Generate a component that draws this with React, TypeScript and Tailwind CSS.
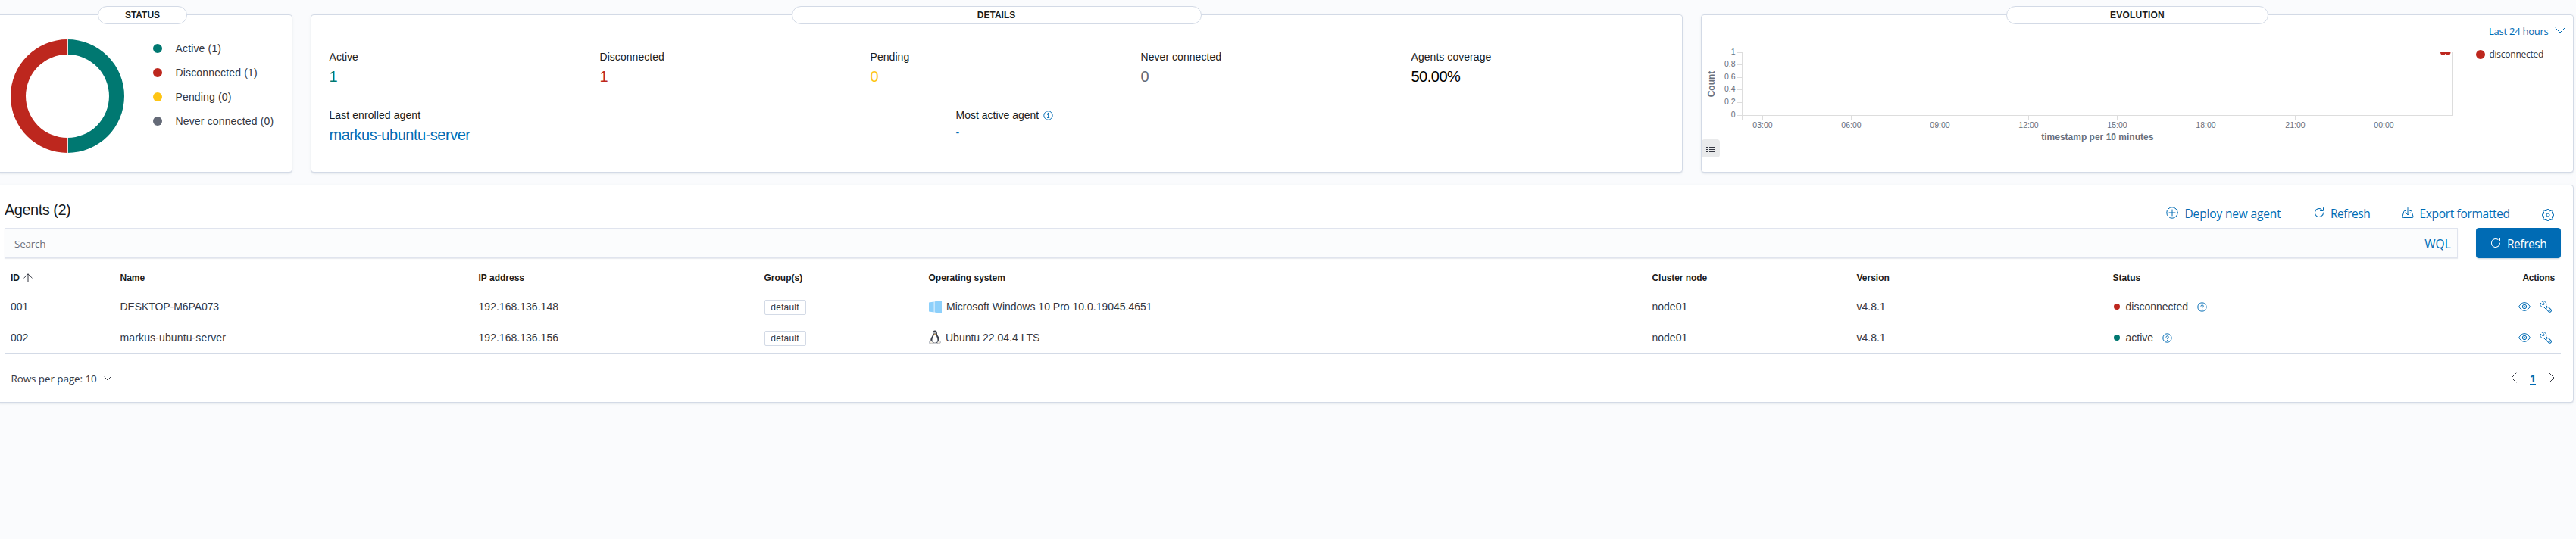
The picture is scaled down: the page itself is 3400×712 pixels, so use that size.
import React, { type ReactNode } from "react";

const SEGOE = "font-['Open_Sans',sans-serif]";
const PANEL =
  "border border-[#d3dae6] bg-white rounded-[4px] shadow-[0_2px_2px_-1px_rgba(152,162,179,0.3),0_1px_5px_-2px_rgba(152,162,179,0.3)]";

/* ---------- icons ---------- */

function RefreshIcon() {
  return (
    <svg width="16" height="16" viewBox="0 0 16 16" fill="currentColor" className="shrink-0">
      <path d="M11.228 2.942a.5.5 0 1 1-.538.842A5 5 0 1 0 13 8a.5.5 0 1 1 1 0 6 6 0 1 1-2.772-5.058zM14 1.5v3A1.5 1.5 0 0 1 12.5 6h-3a.5.5 0 0 1 0-1h3a.5.5 0 0 0 .5-.5v-3a.5.5 0 1 1 1 0z" />
    </svg>
  );
}

function PlusCircleIcon() {
  return (
    <svg width="16" height="16" viewBox="0 0 16 16" fill="none" stroke="currentColor" strokeLinecap="round" className="shrink-0">
      <circle cx="8" cy="8" r="7.2" />
      <path d="M8 4v8M4 8h8" />
    </svg>
  );
}

function ExportIcon() {
  return (
    <svg width="16" height="16" viewBox="0 0 16 16" fill="none" stroke="currentColor" strokeLinecap="round" strokeLinejoin="round" className="shrink-0">
      <path d="M8 1.5v9M5 8l3 2.8L11 8" />
      <path d="M5.2 5.5H3.8a1 1 0 0 0-1 .8L1 13a1.2 1.2 0 0 0 1.2 1.5h11.6A1.2 1.2 0 0 0 15 13l-1.8-6.7a1 1 0 0 0-1-.8h-1.4" />
    </svg>
  );
}

function GearIcon() {
  const teeth = 8;
  const points: string[] = [];
  for (let i = 0; i < teeth; i++) {
    const mid = (i * 2 * Math.PI) / teeth;
    const corners: [number, number][] = [
      [5.9, -0.26],
      [7.5, -0.17],
      [7.5, 0.17],
      [5.9, 0.26],
    ];
    corners.forEach(([r, d]) => points.push(`${8 + r * Math.cos(mid + d)} ${8 + r * Math.sin(mid + d)}`));
  }
  return (
    <svg width="16" height="16" viewBox="0 0 16 16" fill="none" stroke="currentColor" strokeLinejoin="round" className="shrink-0">
      <path d={`M${points.join("L")}Z`} />
      <circle cx="8" cy="8" r="2" />
    </svg>
  );
}

function EyeIcon() {
  return (
    <svg width="16" height="16" viewBox="0 0 16 16" fill="none" stroke="currentColor" strokeLinejoin="round" className="shrink-0">
      <path d="M.6 8C2.4 4.9 5 2.6 8 2.6s5.6 2.3 7.4 5.400c-1.800 3.100-4.400 5.400-7.400 5.400S2.400 11.100.6 8z" />
      <circle cx="8" cy="8" r="2.7" />
      <circle cx="8" cy="8" r="0.9" strokeWidth="0.8" />
    </svg>
  );
}

function WrenchIcon() {
  return (
    <svg width="16" height="16" viewBox="0 0 16 16" fill="none" stroke="currentColor" strokeLinecap="round" strokeLinejoin="round" className="shrink-0">
      <path d="M3.2.8 5.7 3.3v2.1H3.6L1 3C-.1 6 2.2 9.2 5.7 8.7L7.700 10.700M10.200 8.200 8.500 6.300C9.800 3.100 6.800-.4 3.200.8" />
      <rect x="8.2" y="10" width="7.6" height="4" rx="2" transform="rotate(45 12.2 12)" />
      <circle cx="13.3" cy="13.2" r="0.5" fill="currentColor" stroke="none" />
    </svg>
  );
}

function HelpIcon() {
  return (
    <svg width="13" height="13" viewBox="0 0 13 13" fill="none" stroke="#006bb4" strokeLinecap="round" className="shrink-0">
      <circle cx="6.5" cy="6.5" r="5.7" />
      <path d="M4.900 5.300c0-2.100 3.300-2 3.300-.1 0 1.300-1.600 1.300-1.600 2.500" />
      <circle cx="6.6" cy="9.6" r="0.65" fill="#006bb4" stroke="none" />
    </svg>
  );
}

function InfoIcon() {
  return (
    <svg width="13" height="13" viewBox="0 0 13 13" fill="none" stroke="#006bb4" className="shrink-0">
      <circle cx="6.5" cy="6.5" r="5.7" />
      <path d="M5.300 5.500h1.400v4M5.200 9.500h3" />
      <circle cx="6.4" cy="3.5" r="0.7" fill="#006bb4" stroke="none" />
    </svg>
  );
}

function WindowsIcon() {
  return (
    <svg width="17" height="17" viewBox="0 0 17 17" fill="#8dd0fb" className="shrink-0">
      <path d="M0 2.400 6.700 1.400V8H0zM7.500 1.300 17 0v8H7.500zM0 8.800h6.700v6.700L0 14.600zM7.500 8.800H17v8.100l-9.500-1.300z" />
    </svg>
  );
}

function TuxIcon() {
  return (
    <svg width="16" height="19" viewBox="0 0 16 19" className="shrink-0">
      <path d="M8 .5c2 0 2.900 1.500 2.900 3.400 0 1.700.4 2.700 1.300 4.100 1.200 1.800 2 3.700 1.700 6l-2.300 3.200H4.400L2.200 13.800c0-2.100.8-3.900 1.800-5.400C4.900 7 5.200 5.800 5.200 4 5.200 1.900 6 .5 8 .5z" fill="#3a3f4b" />
      <path d="M8 6.800c1.400 0 1.900.8 2.400 2.300.6 1.600 1.200 2.800 1 4.900-.2 1.800-1.500 2.800-3.400 2.800s-3.300-1-3.500-2.800c-.2-1.900.4-3.300 1-4.900.5-1.500 1-2.300 2.500-2.300z" fill="#fff" />
      <circle cx="7" cy="3.9" r="0.8" fill="#fff" />
      <circle cx="9" cy="3.9" r="0.8" fill="#fff" />
      <path d="M6.500 5.400 8 4.700l1.700.7L8 6.500z" fill="#c9a05c" />
      <path d="M.6 15.200 3 13.700l2.500 3-.9 1.600-4-.9z" fill="#f3ece0" stroke="#99a0ad" strokeWidth="0.7" />
      <path d="M15.400 15.400 13.200 13.700l-2.100 2.700.6 1.900 3.600-1.400z" fill="#f3ece0" stroke="#99a0ad" strokeWidth="0.7" />
    </svg>
  );
}

function ListIcon() {
  return (
    <svg width="12" height="12" viewBox="0 0 12 12" stroke="#343741" shapeRendering="crispEdges">
      <path d="M0 1.500h2M3.500 1.500H12M0 4.500h2M3.500 4.500H12M0 7.500h2M3.500 7.500H12M0 10.500h2M3.500 10.500H12" />
    </svg>
  );
}

function Chevron({ className, d, w, h }: { className?: string; d: string; w: number; h: number }) {
  return (
    <svg width={w} height={h} viewBox={`0 0 ${w} ${h}`} fill="none" stroke="currentColor" strokeLinecap="round" strokeLinejoin="round" className={className}>
      <path d={d} />
    </svg>
  );
}

/* ---------- top cards ---------- */

function Card({ title, className, pill, children }: { title: string; className: string; pill: string; children: ReactNode }) {
  return (
    <section className={`flex h-[209px] flex-col items-stretch ${PANEL} ${className}`}>
      <h2
        className={`-mt-[12px] flex h-[24px] shrink-0 items-center justify-center rounded-full border border-[#d3dae6] bg-white text-[12px] leading-[22px] font-bold text-[#1a1c21] ${pill}`}
      >
        {title}
      </h2>
      {children}
    </section>
  );
}

const legend = [
  { label: "Active (1)", color: "bg-[#007871]" },
  { label: "Disconnected (1)", color: "bg-[#bd271e]" },
  { label: "Pending (0)", color: "bg-[#fec514]" },
  { label: "Never connected (0)", color: "bg-[#646a77]" },
];

function StatusCard() {
  return (
    <Card title="STATUS" className="-ml-[4px] w-[390px]" pill="ml-[132px] w-[118px]">
      <div className="flex items-start pt-[16px] pl-[17px]">
        <svg width="150" height="150" viewBox="0 0 150 150" className="mt-[4px]">
          <path d="M75 0A75 75 0 0 1 75 150V130A55 55 0 0 0 75 20z" fill="#007871" />
          <path d="M75 0A75 75 0 0 0 75 150V130A55 55 0 0 1 75 20z" fill="#bd271e" />
          <path d="M75 0v20M75 130v20" stroke="#f3dcda" strokeWidth="2" />
        </svg>
        <ul className="ml-[38px]">
          {legend.map((item) => (
            <li key={item.label} className="flex h-[32px] items-center gap-[17.5px] text-[14px] tracking-[0.15px] text-[#343741]">
              <span className={`size-[12px] rounded-full ${item.color}`} />
              {item.label}
            </li>
          ))}
        </ul>
      </div>
    </Card>
  );
}

const stats = [
  { label: "Active", value: "1", color: "text-[#007871]" },
  { label: "Disconnected", value: "1", color: "text-[#bd271e]" },
  { label: "Pending", value: "0", color: "text-[#fec514]" },
  { label: "Never connected", value: "0", color: "text-[#646a77]" },
  { label: "Agents coverage", value: "50.00%", color: "text-black" },
];

function DetailsCard() {
  return (
    <Card title="DETAILS" className="w-[1811px]" pill="ml-[633.5px] w-[541px]">
      <div className="pt-[31px] pl-[23.5px] text-[14px] leading-[24px] text-[#1a1c21]">
        <dl className="grid grid-cols-[repeat(5,357px)]">
          {stats.map((s) => (
            <div key={s.label}>
              <dt className="tracking-[0.05px]">{s.label}</dt>
              <dd className={`text-[20px] leading-[28px] tracking-[-0.5px] ${s.color}`}>{s.value}</dd>
            </div>
          ))}
        </dl>
        <dl className="mt-[25px] grid grid-cols-[827px_1fr]">
          <div>
            <dt className="tracking-[0.08px]">Last enrolled agent</dt>
            <dd className="text-[20px] leading-[28px] tracking-[-0.48px] text-[#006bb4]">markus-ubuntu-server</dd>
          </div>
          <div>
            <dt className="flex items-center gap-[6px]">
              Most active agent
              <InfoIcon />
            </dt>
            <dd className="leading-[22px] text-[#006bb4]">-</dd>
          </div>
        </dl>
      </div>
    </Card>
  );
}

const yTicks = [
  { y: 69.5, label: "1" },
  { y: 85.5, label: "0.8" },
  { y: 102.5, label: "0.6" },
  { y: 118.5, label: "0.4" },
  { y: 135.5, label: "0.2" },
  { y: 152.5, label: "0" },
];

const xTicks = [
  { x: 2326.5, label: "03:00" },
  { x: 2443.5, label: "06:00" },
  { x: 2560.5, label: "09:00" },
  { x: 2677.5, label: "12:00" },
  { x: 2794.5, label: "15:00" },
  { x: 2911.5, label: "18:00" },
  { x: 3029.5, label: "21:00" },
  { x: 3146.5, label: "00:00" },
];

function EvolutionChart() {
  return (
    <svg width="1004" height="162" viewBox="2246 32 1004 162" className="block font-['Liberation_Sans',sans-serif]">
      <g stroke="#dddddd" shapeRendering="crispEdges" fill="none">
        <path d="M2299.500 69V158M2293 152.500H3238M3236.500 69V152M3237.500 152V158" />
        {yTicks.map((t) => (
          <path key={t.label} d={`M2293 ${t.y}h6`} />
        ))}
        {xTicks.map((t) => (
          <path key={t.label} d={`M${t.x} 153v5`} />
        ))}
      </g>
      <g fill="#69707d" fontSize="10.5">
        {yTicks.map((t) => (
          <text key={t.label} x="2290.5" y={t.y + 2.8} textAnchor="end">
            {t.label}
          </text>
        ))}
        {xTicks.map((t) => (
          <text key={t.label} x={t.x} y="169" textAnchor="middle">
            {t.label}
          </text>
        ))}
      </g>
      <g fill="#69707d" fontSize="12" fontWeight="700" textAnchor="middle">
        <text x="2768.3" y="185">
          timestamp per 10 minutes
        </text>
        <text transform="translate(2263 111) rotate(-90)">Count</text>
      </g>
      <path d="M3221 69h7a3.500 3.500 0 0 1-7 0zM3227.500 69h7a3.500 3.500 0 0 1-7 0z" fill="#bd271e" />
    </svg>
  );
}

function EvolutionCard() {
  return (
    <Card title="EVOLUTION" className="w-[1152px]" pill="ml-[402px] w-[346px] tracking-[0.2px]">
      <div className="flex">
        <div className="w-[1004px]">
          <EvolutionChart />
          <button className="-mt-[10px] flex size-[24px] items-center justify-center rounded-[4px] bg-[#e9eaeb]">
            <ListIcon />
          </button>
        </div>
        <div className={SEGOE}>
          <button className="-mt-px ml-[35px] flex items-start text-[13px] leading-[20px] tracking-[-0.25px] text-[#006bb4]">
            <span className="w-[87px] text-left">Last 24 hours</span>
            <Chevron className="mt-[5px]" w={14} h={8} d="M1 1l6 6 6-6" />
          </button>
          <div className="mt-[10.5px] ml-[18px] flex items-center gap-[5.5px] text-[12px] leading-[20px] tracking-[-0.25px] text-[#343741]">
            <span className="size-[12px] rounded-full bg-[#bd271e]" />
            disconnected
          </div>
        </div>
      </div>
    </Card>
  );
}

/* ---------- agents table ---------- */

const COLS = "grid grid-cols-[144.5px_473px_377px_217px_955px_270px_338px_1fr_auto]";

const agents = [
  {
    id: "001",
    name: "DESKTOP-M6PA073",
    nameClass: "tracking-[-0.08px]",
    ip: "192.168.136.148",
    osIcon: <WindowsIcon />,
    osIconClass: "w-[23.5px] h-[17px]",
    os: "Microsoft Windows 10 Pro 10.0.19045.4651",
    dot: "bg-[#bd271e]",
    status: "disconnected",
  },
  {
    id: "002",
    name: "markus-ubuntu-server",
    nameClass: "tracking-[0.13px]",
    ip: "192.168.136.156",
    osIcon: <TuxIcon />,
    osIconClass: "w-[22.5px] h-[21px]",
    os: "Ubuntu 22.04.4 LTS",
    dot: "bg-[#007871]",
    status: "active",
  },
];

function AgentsTable() {
  return (
    <div className="text-[14px] leading-[24px] text-[#343741]">
      <div className={`${COLS} h-[44px] border-b border-[#d3dae6] pt-[17px] pl-[8px] text-[12px] leading-[18px] font-bold text-[#1a1c21]`}>
        <span className="flex items-start">
          ID
          <svg width="12" height="12" viewBox="0 0 12 12" fill="none" stroke="#343741" strokeLinecap="round" className="mt-[3px] ml-[5px]">
            <path d="M6 1v10.500M.8 6 6 .9 11.200 6" />
          </svg>
        </span>
        <span>Name</span>
        <span>IP address</span>
        <span>Group(s)</span>
        <span>Operating system</span>
        <span className="tracking-[-0.05px]">Cluster node</span>
        <span>Version</span>
        <span>Status</span>
        <span className="pr-[8px] tracking-[-0.2px]">Actions</span>
      </div>
      {agents.map((a) => (
        <div key={a.id} className={`${COLS} h-[41px] items-center border-b border-[#d3dae6] pl-[8px]`}>
          <span>{a.id}</span>
          <span className={a.nameClass}>{a.name}</span>
          <span className="tracking-[0.03px]">{a.ip}</span>
          <span className="flex h-full items-center pt-px">
            <span className="flex h-[20px] w-[55px] items-center justify-center rounded-[2px] border border-[#d3dae6] text-[12px] leading-[18px] tracking-[0.2px]">
              default
            </span>
          </span>
          <span className="flex items-center">
            <span className={`flex items-start ${a.osIconClass}`}>{a.osIcon}</span>
            {a.os}
          </span>
          <span>node01</span>
          <span>v4.8.1</span>
          <span className="flex items-center">
            <span className={`mr-[8px] ml-[1px] size-[8px] rounded-full ${a.dot}`} />
            {a.status}
            <span className="mt-[1px] ml-[11.5px]">
              <HelpIcon />
            </span>
          </span>
          <span className="flex gap-[12px] pr-[12px] text-[#006bb4]">
            <EyeIcon />
            <WrenchIcon />
          </span>
        </div>
      ))}
    </div>
  );
}

function AgentsPanel() {
  return (
    <section className={`mt-[16px] -ml-[4px] h-[288px] w-[3401px] pr-[16px] pl-[9px] ${PANEL}`}>
      <header className="flex h-[56px] items-start justify-between">
        <h1 className="pt-[16px] text-[20px] leading-[32px] tracking-[-0.5px] text-[#1a1c21]">Agents (2)</h1>
        <div className={`flex items-start pt-[25px] pr-[9px] text-[15.5px] leading-[24px] text-[#006bb4] ${SEGOE}`}>
          <button className="flex w-[194px] items-start gap-[8.5px] tracking-[-0.15px]">
            <span className="pt-[3px]"><PlusCircleIcon /></span>
            Deploy new agent
          </button>
          <button className="flex w-[117px] items-start gap-[7px] tracking-[-0.45px]">
            <span className="pt-[3px]"><RefreshIcon /></span>
            Refresh
          </button>
          <button className="flex w-[185px] items-start gap-[7.5px] tracking-[-0.33px]">
            <span className="pt-[3px]"><ExportIcon /></span>
            Export formatted
          </button>
          <button className="pt-[6px]"><GearIcon /></button>
        </div>
      </header>

      <div className={`flex justify-between ${SEGOE}`}>
        <div className="flex h-[40px] w-[3238px] border border-[#e0e4ee] bg-[#fbfcfd] shadow-[0_1px_1px_rgba(152,162,179,0.2)]">
          <span className="flex-1 pt-[10px] pl-[12px] text-[13.5px] leading-[20px] tracking-[-0.25px] text-[#69707d]">Search</span>
          <button className="flex w-[52px] justify-center border-l border-[#e0e4ee] pt-[8px] text-[15.5px] leading-[24px] text-[#006bb4]">WQL</button>
        </div>
        <button className="flex h-[40px] w-[112px] items-start gap-[7px] rounded-[4px] bg-[#006bb4] pt-[9px] pl-[18px] text-[15.5px] leading-[24px] tracking-[-0.45px] text-white shadow-[0_2px_2px_-1px_rgba(54,97,126,0.3)]">
          <span className="pt-[3px]"><RefreshIcon /></span>
          Refresh
        </button>
      </div>

      <AgentsTable />

      <footer className={`flex items-start justify-between pt-[23px] pr-[8px] pl-[8.5px] text-[13.5px] leading-[20px] text-[#343741] ${SEGOE}`}>
        <button className="flex items-start gap-[9px] tracking-[-0.1px]">
          Rows per page: 10
          <Chevron className="mt-[7px]" w={10} h={6} d="M1 1l4 4 4-4" />
        </button>
        <nav className="flex items-start">
          <Chevron className="mt-[2px]" w={8} h={14} d="M7 1L1 7l6 6" />
          <span className="mx-[17px] w-[8px] text-center text-[14px] font-bold text-[#006bb4] underline underline-offset-2">1</span>
          <Chevron className="mt-[2px]" w={8} h={14} d="M1 1l6 6-6 6" />
        </nav>
      </footer>
    </section>
  );
}

export default function App() {
  return (
    <main className="h-[712px] w-[3400px] overflow-hidden bg-[#fafbfd] pt-[19px] font-['Liberation_Sans',Arial,sans-serif]">
      <div className="flex gap-[24px]">
        <StatusCard />
        <DetailsCard />
        <EvolutionCard />
      </div>
      <AgentsPanel />
    </main>
  );
}
